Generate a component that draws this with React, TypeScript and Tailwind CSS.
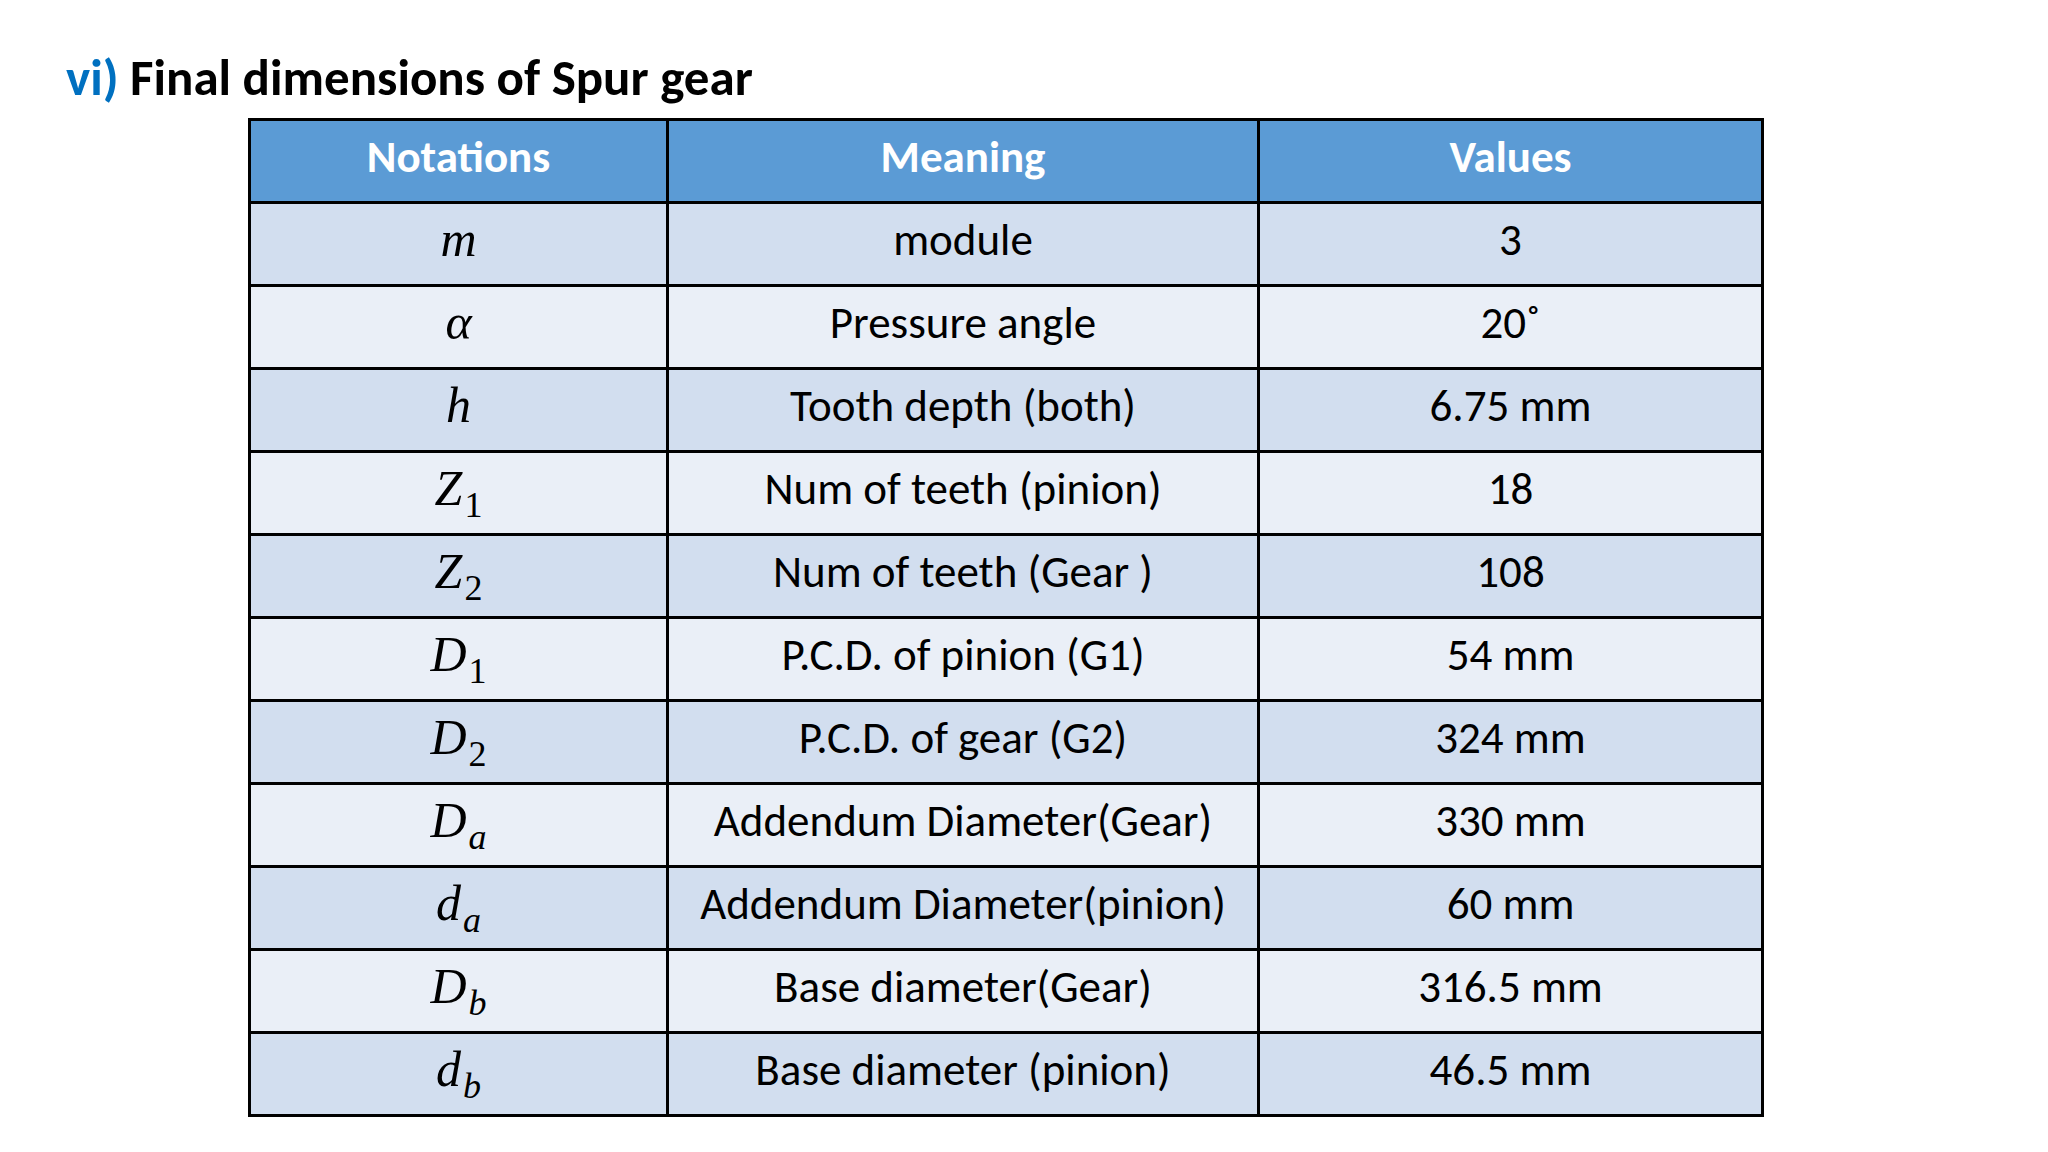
import React from "react";

const body = "font-['Carlito','Lato','Liberation_Sans',sans-serif]";

type Row = { sym: string; sub?: string; subItalic?: boolean; meaning: string; value: string };

const rows: Row[] = [
  { sym: "m", meaning: "module", value: "3" },
  { sym: "α", meaning: "Pressure angle", value: "20˚" },
  { sym: "h", meaning: "Tooth depth (both)", value: "6.75 mm" },
  { sym: "Z", sub: "1", meaning: "Num of teeth (pinion)", value: "18" },
  { sym: "Z", sub: "2", meaning: "Num of teeth (Gear )", value: "108" },
  { sym: "D", sub: "1", meaning: "P.C.D. of pinion (G1)", value: "54 mm" },
  { sym: "D", sub: "2", meaning: "P.C.D. of gear (G2)", value: "324 mm" },
  { sym: "D", sub: "a", subItalic: true, meaning: "Addendum Diameter(Gear)", value: "330 mm" },
  { sym: "d", sub: "a", subItalic: true, meaning: "Addendum Diameter(pinion)", value: "60 mm" },
  { sym: "D", sub: "b", subItalic: true, meaning: "Base diameter(Gear)", value: "316.5 mm" },
  { sym: "d", sub: "b", subItalic: true, meaning: "Base diameter (pinion)", value: "46.5 mm" },
];

function Notation({ r }: { r: Row }) {
  return (
    <span className="font-['Liberation_Serif','DejaVu_Serif',serif] text-[50px] text-black">
      <span className="italic">{r.sym}</span>
      {r.sub && (
        <span
          className={`relative top-[12px] ml-[2px] text-[36px] ${r.subItalic ? "italic" : "not-italic"}`}
        >
          {r.sub}
        </span>
      )}
    </span>
  );
}

const cell = "border-[3px] border-black text-center leading-none pb-[10px]";

export default function App() {
  return (
    <div className={`w-[2048px] h-[1152px] bg-white pt-[52px] pl-[66px] ${body}`}>
      <h1 className="text-[51px] leading-none font-bold text-black h-[51px]">
        <span className="text-[#0070c0]">vi)</span> Final dimensions of Spur gear
      </h1>
      <table className="mt-[15px] ml-[182px] w-[1513px] table-fixed border-collapse border-[3px] border-black">
        <colgroup>
          <col className="w-[418px]" />
          <col className="w-[591px]" />
          <col className="w-[504px]" />
        </colgroup>
        <thead>
          <tr className="h-[83px] bg-[#5b9bd5]">
            {["Notations", "Meaning", "Values"].map((h) => (
              <th key={h} className={`${cell} text-[45px] font-bold text-white`}>
                {h}
              </th>
            ))}
          </tr>
        </thead>
        <tbody>
          {rows.map((r, i) => (
            <tr key={i} className={`h-[83px] ${i % 2 === 0 ? "bg-[#d2deef]" : "bg-[#eaeff7]"}`}>
              <td className={cell}>
                <Notation r={r} />
              </td>
              <td className={`${cell} text-[45px] text-black`}>{r.meaning}</td>
              <td className={`${cell} text-[45px] text-black`}>{r.value}</td>
            </tr>
          ))}
        </tbody>
      </table>
    </div>
  );
}
